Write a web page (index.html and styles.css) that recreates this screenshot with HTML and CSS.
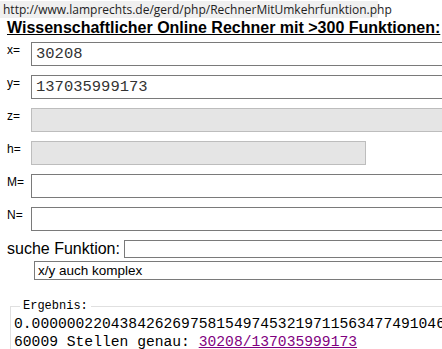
FILE: index.html
```html
<!DOCTYPE html>
<html>

<head>
  <title>Rechner</title>
  <meta charset="UTF-8">
  <link rel="stylesheet" href="styles.css">
</head>

<body>
  <div class="url">http://www.lamprechts.de/gerd/php/RechnerMitUmkehrfunktion.php</div>

  <h1 class="title">Wissenschaftlicher Online Rechner mit &gt;300 Funktionen:</h1>

  <form class="calc">
    <div class="row">
      <label for="x">x=</label>
      <input type="text" id="x" class="field" value="30208">
    </div>
    <div class="row">
      <label for="y">y=</label>
      <input type="text" id="y" class="field" value="137035999173">
    </div>
    <div class="row">
      <label for="z">z=</label>
      <input type="text" id="z" class="field" disabled>
    </div>
    <div class="row">
      <label for="h">h=</label>
      <input type="text" id="h" class="field short" disabled>
    </div>
    <div class="row">
      <label for="m">M=</label>
      <input type="text" id="m" class="field">
    </div>
    <div class="row">
      <label for="n">N=</label>
      <input type="text" id="n" class="field">
    </div>

    <div class="search">
      <label for="such">suche Funktion:</label>
      <input type="text" id="such" class="search-field">
    </div>
    <div class="mode">x/y auch komplex</div>
  </form>

  <fieldset class="result">
    <legend>Ergebnis:</legend>
    <div class="line">0.00000022043842626975815497453219711563477491046</div>
    <div class="line">60009 Stellen genau: <a href="#">30208/137035999173</a></div>
  </fieldset>
</body>

</html>
```

FILE: styles.css
```css
* {
  box-sizing: border-box;
}

body {
  margin: 0;
  overflow: hidden;
  font-family: "Liberation Sans", Arial, sans-serif;
  color: #000;
  background: #fff;
}

.url {
  display: inline-block;
  width: 378px;
  height: 17px;
  padding-left: 3px;
  background-color: #f0f0f0;
  font-family: "Open Sans", "Noto Sans", sans-serif;
  font-size: 12px;
  line-height: 17px;
  color: #222;
  white-space: nowrap;
}

.title {
  margin: 0 0 0 7px;
  font-size: 16px;
  line-height: 20px;
  font-weight: bold;
  text-decoration: underline;
  white-space: nowrap;
}

.calc {
  margin: 4px 0 0 7px;
}

.row {
  display: flex;
  align-items: flex-start;
  margin-bottom: 9px;
}

.row label {
  width: 24px;
  flex: none;
  font-size: 12px;
  padding-top: 1px;
}

.field {
  flex: none;
  width: 430px;
  height: 24px;
  margin: 0;
  padding: 0 4px;
  border: 1px solid #7a7a7a;
  font-family: "Liberation Mono", "Courier New", monospace;
  font-size: 15.5px;
  color: #333;
  background: #fff;
}

.field:disabled {
  background-color: #e5e5e5;
  border-color: #bdbdbd;
}

.field.short {
  width: 335px;
}

.search {
  display: flex;
  align-items: center;
  margin-top: 5px;
}

.search label {
  font-size: 16px;
  width: 117px;
  flex: none;
}

.search-field {
  flex: none;
  width: 330px;
  height: 18px;
  margin: 0;
  border: 1px solid #7a7a7a;
}

.mode {
  width: 420px;
  height: 19px;
  margin: 3px 0 0 27px;
  padding-left: 3px;
  border: 1px solid #7a7a7a;
  font-size: 13.5px;
  line-height: 17px;
  white-space: nowrap;
}

.result {
  margin: 19px 0 0 10px;
  padding: 2px 0 0 3px;
  width: 460px;
  border: 1px solid #e0e0e0;
  border-bottom: none;
  border-right: none;
}

.result legend {
  margin-left: 6px;
  padding: 0 3px;
  font-family: "Liberation Mono", "Courier New", monospace;
  font-size: 12px;
}

.line {
  font-family: "Liberation Mono", "Courier New", monospace;
  font-size: 14.67px;
  line-height: 18px;
  white-space: nowrap;
}

.line a {
  color: #800080;
}
```
